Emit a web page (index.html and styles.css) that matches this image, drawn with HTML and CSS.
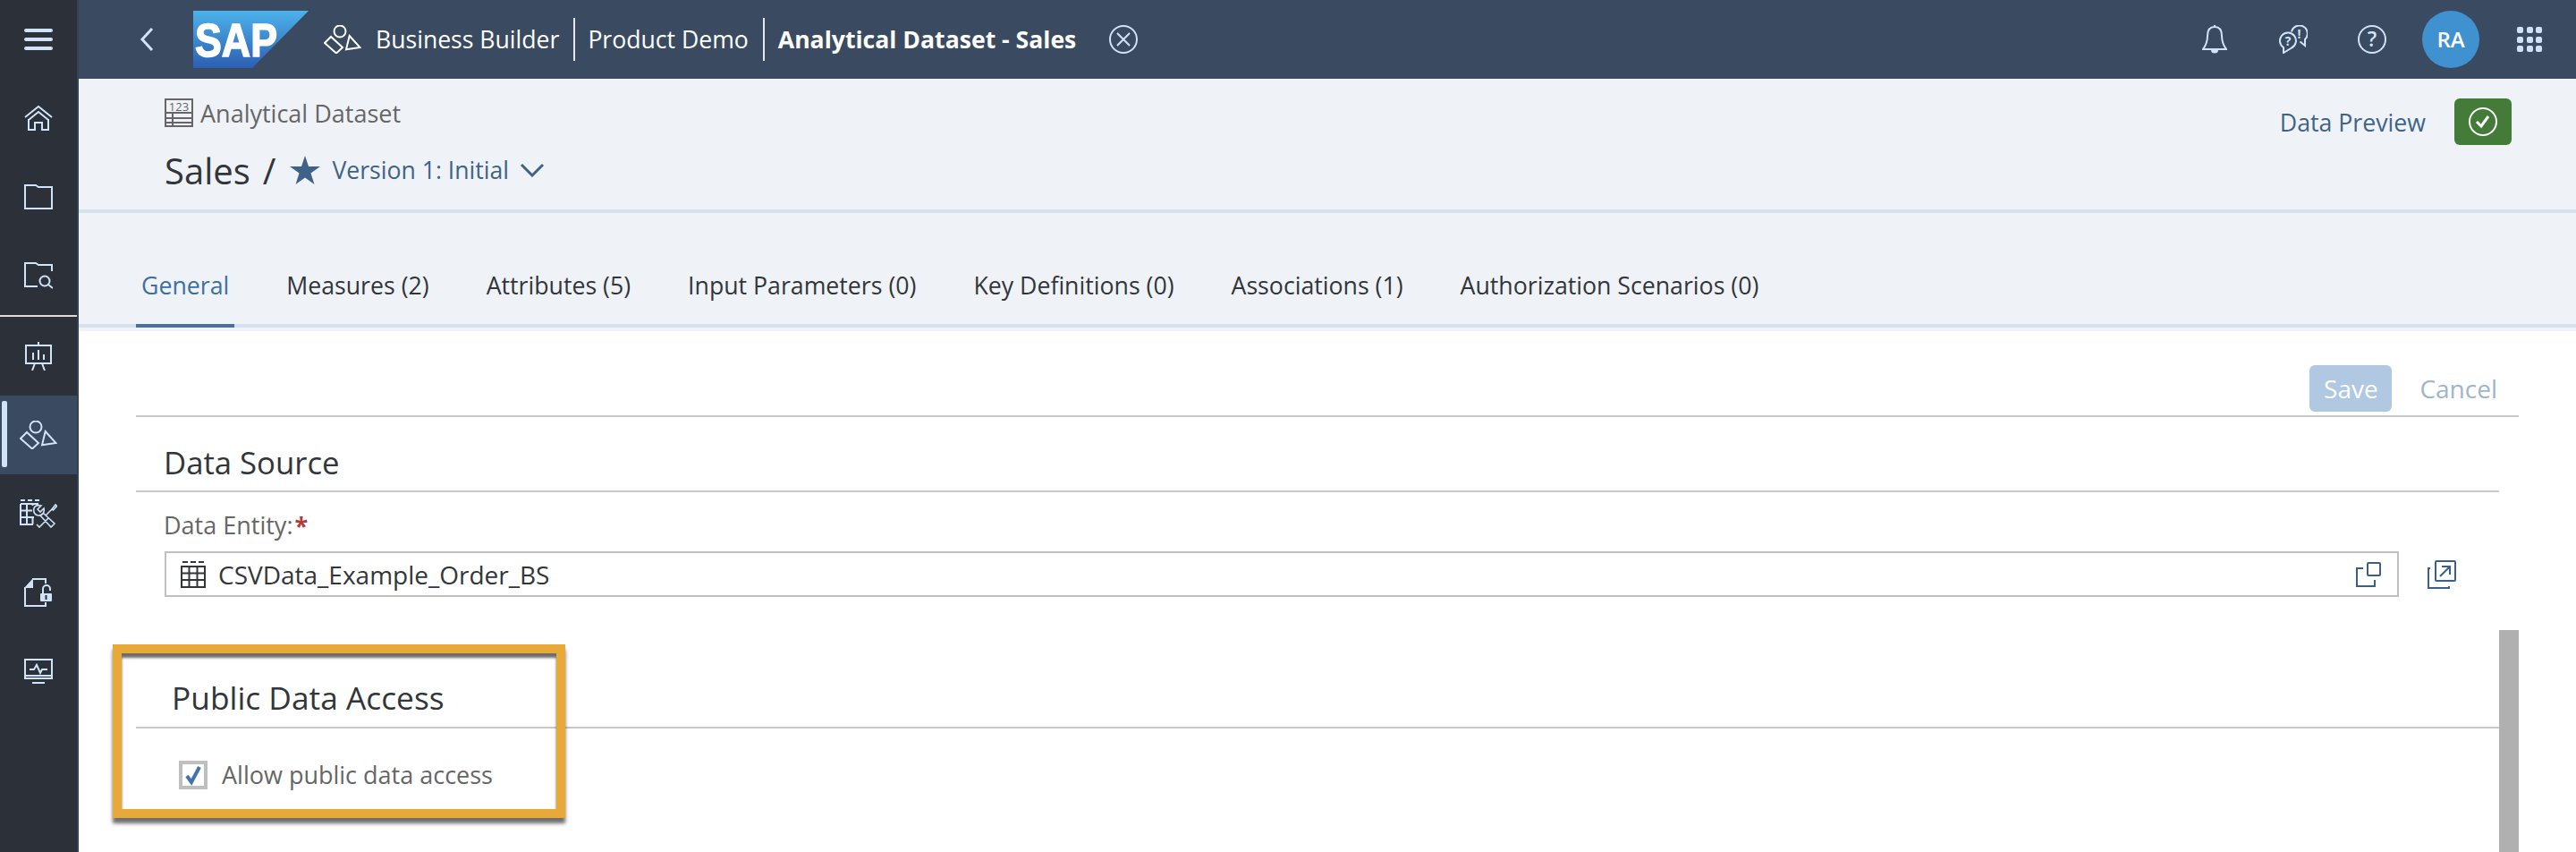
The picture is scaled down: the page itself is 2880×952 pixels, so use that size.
FILE: index.html
```html
<!DOCTYPE html>
<html>
<head>
  <title>Analytical Dataset - Sales</title>
  <link rel="stylesheet" href="styles.css">
</head>
<body>
  <aside class="rail">
    <div class="rail-item">
      <svg class="ico" width="32" height="24" viewBox="0 0 32 24"><path class="bars" d="M2 2H30M2 12H30M2 22H30"/></svg>
    </div>
    <div class="rail-item">
      <svg class="ico" width="32" height="28" viewBox="0 0 32 28"><path d="M1 13L16 1L31 13M5 16L16 7L27 16M5 15V27H12V19H20V27H27V15"/></svg>
    </div>
    <div class="rail-item">
      <svg class="ico" width="32" height="28" viewBox="0 0 32 28"><path d="M1 1H13L16 3H31V27H1Z"/></svg>
    </div>
    <div class="rail-item">
      <svg class="ico" width="32" height="30" viewBox="0 0 32 30"><path d="M15 27H1V1H13L16 3H31V10M27 25L32 29"/><circle cx="23" cy="21" r="5.5"/></svg>
    </div>
    <div class="rail-sep"></div>
    <div class="rail-item">
      <svg class="ico" width="32" height="32" viewBox="0 0 32 32"><path d="M16 0V4M2 4H30V24H2ZM10 12V20M16 9V20M22 14V20M12 24L9 32M20 24L23 32"/></svg>
    </div>
    <div class="rail-item active">
      <svg class="ico" width="42" height="32" viewBox="0 0 42 32"><circle cx="18" cy="7" r="6.5"/><path d="M1 20L8 13L21 25L14 31.500ZM28.700 12L40.500 25L25 27.300Z"/></svg>
    </div>
    <div class="rail-item">
      <svg class="ico" width="42" height="32" viewBox="0 0 42 32"><path d="M1 1H6M9 1H14M17 1H22M1 5H21M1 5V28H15M8 5V28M14.500 5V7M14.500 20V28M1 12.500H14M1 20H16"/><path class="thin" d="M24 7L20 11L23 14L27 10C28 14 26 18 21 18C17 18 15 14 16 10C17 7 20 6 24 7ZM23 18L35 31L39 27L26 15M19 28L22 31L32 21M29 18L36 11M36 11L40 6L41.500 7.500L37.500 12Z"/></svg>
    </div>
    <div class="rail-item">
      <svg class="ico" width="32" height="32" viewBox="0 0 32 32"><path d="M9 1H24V6M24 27V31H1V10"/><path class="fill" d="M0 11L10 0V11Z"/><path d="M21 17V12A4 4 0 0 1 29 12V14"/><rect class="fill" x="18" y="17" width="13" height="9" rx="1"/><rect class="hole" x="23.500" y="19" width="2" height="5"/></svg>
    </div>
    <div class="rail-item">
      <svg class="ico" width="32" height="28" viewBox="0 0 32 28"><path d="M1 1H31V22H1ZM1 19H31M9 27H23M6 12H11L14 7L18 16L20 12H26"/></svg>
    </div>
  </aside>

  <div class="main">
    <header class="shell">
      <svg class="ico back" width="16" height="28" viewBox="0 0 16 28"><path d="M14 2L3 14L14 26" stroke-width="3"/></svg>
      <svg class="logo" width="129" height="64" viewBox="0 0 129 64">
        <defs>
          <linearGradient id="sapBlue" x1="0" y1="0" x2="0" y2="1">
            <stop offset="0" stop-color="#4db2ea"/>
            <stop offset="1" stop-color="#2c5fb3"/>
          </linearGradient>
        </defs>
        <path d="M0 0H129L66 64H0Z" fill="url(#sapBlue)"/>
        <text class="logo-text" x="2" y="51" textLength="92" lengthAdjust="spacingAndGlyphs">SAP</text>
      </svg>
      <svg class="ico shapes" width="42" height="32" viewBox="0 0 42 32"><circle cx="18" cy="7" r="6.5"/><path d="M1 20L8 13L21 25L14 31.500ZM28.700 12L40.500 25L25 27.300Z"/></svg>
      <span class="crumb first">Business Builder</span>
      <span class="crumb-sep"></span>
      <span class="crumb">Product Demo</span>
      <span class="crumb-sep"></span>
      <span class="crumb current">Analytical Dataset - Sales</span>
      <svg class="ico close" width="32" height="32" viewBox="0 0 32 32"><circle cx="16" cy="16" r="15"/><path d="M9 9L23 23M23 9L9 23"/></svg>

      <div class="shell-right">
        <svg class="ico" width="28" height="32" viewBox="0 0 28 32"><path d="M14 2C8 2 6 7 6 12C6 19 4 23 1 27H27C24 23 22 19 22 12C22 7 20 2 14 2ZM14 0V2"/><path class="fill" d="M10 28A4 3.500 0 0 0 18 28Z"/></svg>
        <svg class="ico chat" width="32" height="32" viewBox="0 0 32 32">
          <path d="M5 25A9 9 0 1 1 14 25.500L5 31Z"/>
          <path d="M14 7.500A9 9 0 1 1 29 16L29 23L23.500 18.500"/>
          <text class="chat-mark" x="10" y="23">?</text>
          <text class="chat-mark" x="22.500" y="14.500">!</text>
        </svg>
        <svg class="ico help" width="32" height="32" viewBox="0 0 32 32"><circle cx="16" cy="16" r="15"/><text class="help-mark" x="16" y="24">?</text></svg>
        <div class="avatar">RA</div>
        <div class="launcher">
          <i></i><i></i><i></i><i></i><i></i><i></i><i></i><i></i><i></i>
        </div>
      </div>
    </header>

    <section class="object-head">
      <div class="object-info">
        <div class="object-type">
          <svg class="type-ico" width="32" height="32" viewBox="0 0 32 32"><path d="M1 1H31V31H1ZM1 16H31M1 22H31M1 27H31M9 16V31"/><text class="type-digits" x="16" y="13.500">123</text></svg>
          <span>Analytical Dataset</span>
        </div>
        <div class="object-title">
          <span class="name">Sales</span>
          <span class="slash">/</span>
          <svg class="star" width="34" height="32" viewBox="0 0 34 32"><path d="M17 0L21 12H34L23.500 19.500L27.500 32L17 24.500L6.500 32L10.500 19.500L0 12H13Z"/></svg>
          <span class="version">Version 1: Initial</span>
          <svg class="chevron" width="28" height="16" viewBox="0 0 28 16"><path d="M2 2L14 14L26 2"/></svg>
        </div>
      </div>
      <div class="object-actions">
        <span class="preview">Data Preview</span>
        <button class="status-btn">
          <svg width="32" height="32" viewBox="0 0 32 32"><circle cx="16" cy="16" r="15"/><path d="M9 16L14 21L22 10" stroke-width="3"/></svg>
        </button>
      </div>
    </section>

    <nav class="tabs">
      <a class="tab selected">General</a>
      <a class="tab">Measures (2)</a>
      <a class="tab">Attributes (5)</a>
      <a class="tab">Input Parameters (0)</a>
      <a class="tab">Key Definitions (0)</a>
      <a class="tab">Associations (1)</a>
      <a class="tab">Authorization Scenarios (0)</a>
    </nav>

    <section class="content">
      <div class="toolbar">
        <button class="save">Save</button>
        <span class="cancel">Cancel</span>
      </div>

      <div class="section">
        <h2 class="section-title">Data Source</h2>
        <div class="field-label">Data Entity:<span class="required">*</span></div>
        <div class="field-row">
          <div class="field">
            <svg class="table-ico" width="28" height="30" viewBox="0 0 28 30"><path d="M2 1H8M11 1H17M20 1H26M1 6H27V29H1ZM1 13.500H27M1 21H27M9.500 6V29M18.500 6V29"/></svg>
            <span class="field-value">CSVData_Example_Order_BS</span>
            <svg class="link-ico" width="28" height="28" viewBox="0 0 28 28"><path d="M8 7H1V27H21V20"/><rect x="13" y="1" width="14" height="14" rx="1"/></svg>
          </div>
          <svg class="link-ico" width="32" height="32" viewBox="0 0 32 32"><path d="M3 9H1V31H24V29"/><rect x="9" y="1" width="22" height="22" rx="1"/><path d="M14 18L25 7M16 7H25V16"/></svg>
        </div>
      </div>

      <div class="section public">
        <h2 class="section-title">Public Data Access</h2>
        <label class="check-row">
          <span class="checkbox">
            <svg width="20" height="24" viewBox="0 0 20 24"><path d="M3 13L8 20L17 3"/></svg>
          </span>
          Allow public data access
        </label>
      </div>

      <div class="highlight"></div>
      <div class="scroll-thumb"></div>
    </section>
  </div>
</body>
</html>
```

FILE: styles.css
```css
* {
  box-sizing: border-box;
}

html, body {
  margin: 0;
  height: 952px;
  overflow: hidden;
}

body {
  display: flex;
  font-family: "Open Sans", "Noto Sans", sans-serif;
  font-size: 27px;
  color: #32363a;
  background: #fff;
}

.ico {
  display: block;
  flex: none;
  fill: none;
  stroke: #d1e3f8;
  stroke-width: 2;
}

.ico .bars {
  stroke-width: 4;
  stroke-linecap: round;
}

.ico .thin {
  stroke-width: 1.6;
}

.ico .fill {
  fill: #d1e3f8;
  stroke: none;
}

.ico .hole {
  fill: #2b3039;
  stroke: none;
}

/* left rail */
.rail {
  width: 88px;
  flex: none;
  background: #2b3039;
  border-right: 2px solid #36414f;
}

.rail-item {
  height: 88px;
  display: flex;
  align-items: center;
  justify-content: center;
  position: relative;
}

.rail-item.active {
  background: #3a4a60;
}

.rail-item.active::before {
  content: "";
  position: absolute;
  left: 2px;
  top: 6px;
  bottom: 8px;
  width: 6px;
  border-radius: 2px;
  background: #d1e3f8;
}

.rail-sep {
  height: 2px;
  background: #e0dcd5;
}

/* shell bar */
.main {
  flex: 1;
  min-width: 0;
  display: flex;
  flex-direction: column;
}

.shell {
  height: 88px;
  flex: none;
  display: flex;
  align-items: center;
  padding-left: 68px;
  padding-right: 38px;
  background: #3a4a60;
  color: #fff;
  font-size: 26.6px;
}

.logo {
  display: block;
  flex: none;
  margin-left: 44px;
}

.logo-text {
  font-family: "Liberation Sans", sans-serif;
  font-weight: 700;
  font-size: 52px;
  fill: #fff;
  stroke: #fff;
  stroke-width: 1.5;
}

.shapes {
  margin-left: 17px;
  stroke: #fff;
}

.crumb {
  margin-left: 14px;
  white-space: nowrap;
}

.crumb.first {
  margin-left: 16px;
}

.crumb.current {
  margin-left: 15px;
  font-weight: 700;
}

.crumb-sep {
  width: 2px;
  height: 48px;
  margin-left: 16px;
  background: #e8e8e8;
}

.close {
  margin-left: 37px;
}

.shell-right {
  margin-left: auto;
  display: flex;
  align-items: center;
}

.chat {
  margin-left: 58px;
}

.chat-mark {
  font-size: 14px;
  font-weight: 700;
  fill: #d1e3f8;
  stroke: none;
  text-anchor: middle;
}

.help {
  margin-left: 56px;
}

.help-mark {
  font-size: 23px;
  font-weight: 600;
  fill: #d1e3f8;
  stroke: none;
  text-anchor: middle;
}

.avatar {
  width: 64px;
  height: 64px;
  margin-left: 40px;
  border-radius: 50%;
  background: #3f92cf;
  color: #fff;
  font-size: 24px;
  font-weight: 600;
  line-height: 64px;
  text-align: center;
}

.launcher {
  width: 28px;
  margin-left: 42px;
  display: grid;
  grid-template-columns: repeat(3, 7px);
  gap: 3.5px;
}

.launcher i {
  height: 7px;
  border-radius: 2px;
  background: #d1e3f8;
}

/* object header */
.object-head {
  height: 150px;
  flex: none;
  display: flex;
  justify-content: space-between;
  padding: 22px 72px 0 96px;
  background: #eff3f8;
  border-bottom: 4px solid #d5e1ee;
}

.object-type {
  height: 32px;
  display: flex;
  align-items: center;
  gap: 8px;
  color: #666;
}

.type-ico {
  display: block;
  fill: none;
  stroke: #666;
  stroke-width: 2;
}

.type-digits {
  font-size: 13px;
  fill: #666;
  stroke: none;
  text-anchor: middle;
}

.object-title {
  height: 32px;
  margin-top: 32px;
  display: flex;
  align-items: center;
}

.name {
  font-size: 40px;
}

.slash {
  margin-left: 14px;
  font-size: 40px;
}

.star {
  display: block;
  margin-left: 16px;
  fill: #3f6388;
}

.version {
  margin-left: 13px;
  color: #3f6388;
  font-size: 26.6px;
}

.chevron {
  display: block;
  margin-left: 12px;
  fill: none;
  stroke: #3f6388;
  stroke-width: 3;
}

.object-actions {
  height: 52px;
  display: flex;
  align-items: center;
  gap: 32px;
}

.preview {
  color: #3f6388;
  font-size: 26.7px;
}

.status-btn {
  width: 64px;
  height: 52px;
  padding: 0;
  display: flex;
  align-items: center;
  justify-content: center;
  border: none;
  border-radius: 6px;
  background: #457b38;
}

.status-btn svg {
  display: block;
  fill: none;
  stroke: #fff;
  stroke-width: 2;
}

/* tabs */
.tabs {
  height: 128px;
  flex: none;
  display: flex;
  align-items: flex-end;
  padding-left: 64px;
  background: #eff3f8;
  border-bottom: 4px solid #d5e1ee;
  font-size: 26.7px;
}

.tab {
  height: 96px;
  margin-right: 52px;
  margin-bottom: -4px;
  padding: 4px 6px 0;
  display: flex;
  align-items: center;
  border-bottom: 4px solid transparent;
  white-space: nowrap;
}

.tab.selected {
  color: #3f6f9f;
  border-bottom-color: #4a7199;
}

/* content */
.content {
  flex: 1;
  position: relative;
  padding: 0 64px;
  border-top: 4px solid #eff3f8;
  background: #fff;
}

.toolbar {
  display: flex;
  align-items: center;
  justify-content: flex-end;
  gap: 31px;
  padding: 38px 24px 4px 0;
  border-bottom: 2px solid #c8c8c8;
  font-size: 28px;
}

.save {
  width: 92px;
  height: 52px;
  padding: 0;
  border: none;
  border-radius: 6px;
  background: #b0c8e2;
  color: #fff;
  font-family: inherit;
  font-size: 28px;
}

.cancel {
  color: #9fb5cb;
}

.section {
  margin-right: 22px;
}

.section-title {
  margin: 0;
  padding: 30px 0 10px 31px;
  font-size: 34.7px;
  font-weight: 400;
  line-height: 42px;
  border-bottom: 2px solid #c8c8c8;
}

.field-label {
  margin: 21px 0 0 31px;
  line-height: 32px;
  color: #666;
}

.required {
  margin-left: 2px;
  color: #b23a3a;
  font-weight: 700;
}

.field-row {
  display: flex;
  align-items: center;
  gap: 32px;
  margin-top: 13px;
  padding: 0 48px 0 32px;
}

.field {
  flex: 1;
  height: 51px;
  display: flex;
  align-items: center;
  gap: 14px;
  padding: 0 18px 0 16px;
  border: 2px solid #bfbfbf;
}

.table-ico {
  display: block;
  flex: none;
  fill: none;
  stroke: #32363a;
  stroke-width: 2;
}

.field-value {
  flex: 1;
  font-size: 28px;
}

.link-ico {
  display: block;
  flex: none;
  fill: none;
  stroke: #3d5f85;
  stroke-width: 2;
}

.section.public .section-title {
  margin-top: 61px;
  padding-left: 40px;
  padding-bottom: 12px;
  font-size: 35.3px;
}

.check-row {
  display: flex;
  align-items: center;
  gap: 16px;
  margin: 36px 0 0 48px;
  line-height: 32px;
  color: #666;
}

.checkbox {
  width: 32px;
  height: 32px;
  flex: none;
  display: flex;
  align-items: center;
  justify-content: center;
  border: 4px solid #bfbfbf;
}

.checkbox svg {
  display: block;
  fill: none;
  stroke: #3f74a8;
  stroke-width: 4;
}

/* annotation over the page */
.highlight {
  position: absolute;
  left: 38px;
  top: 350px;
  width: 506px;
  height: 194px;
  border: 10px solid #e6a93a;
  box-shadow: 0 6px 4px rgba(60, 60, 60, 0.75), inset 0 5px 3px rgba(70, 70, 70, 0.8);
}

.scroll-thumb {
  position: absolute;
  right: 64px;
  top: 334px;
  bottom: 0;
  width: 22px;
  background: #b0b0b0;
}
```
